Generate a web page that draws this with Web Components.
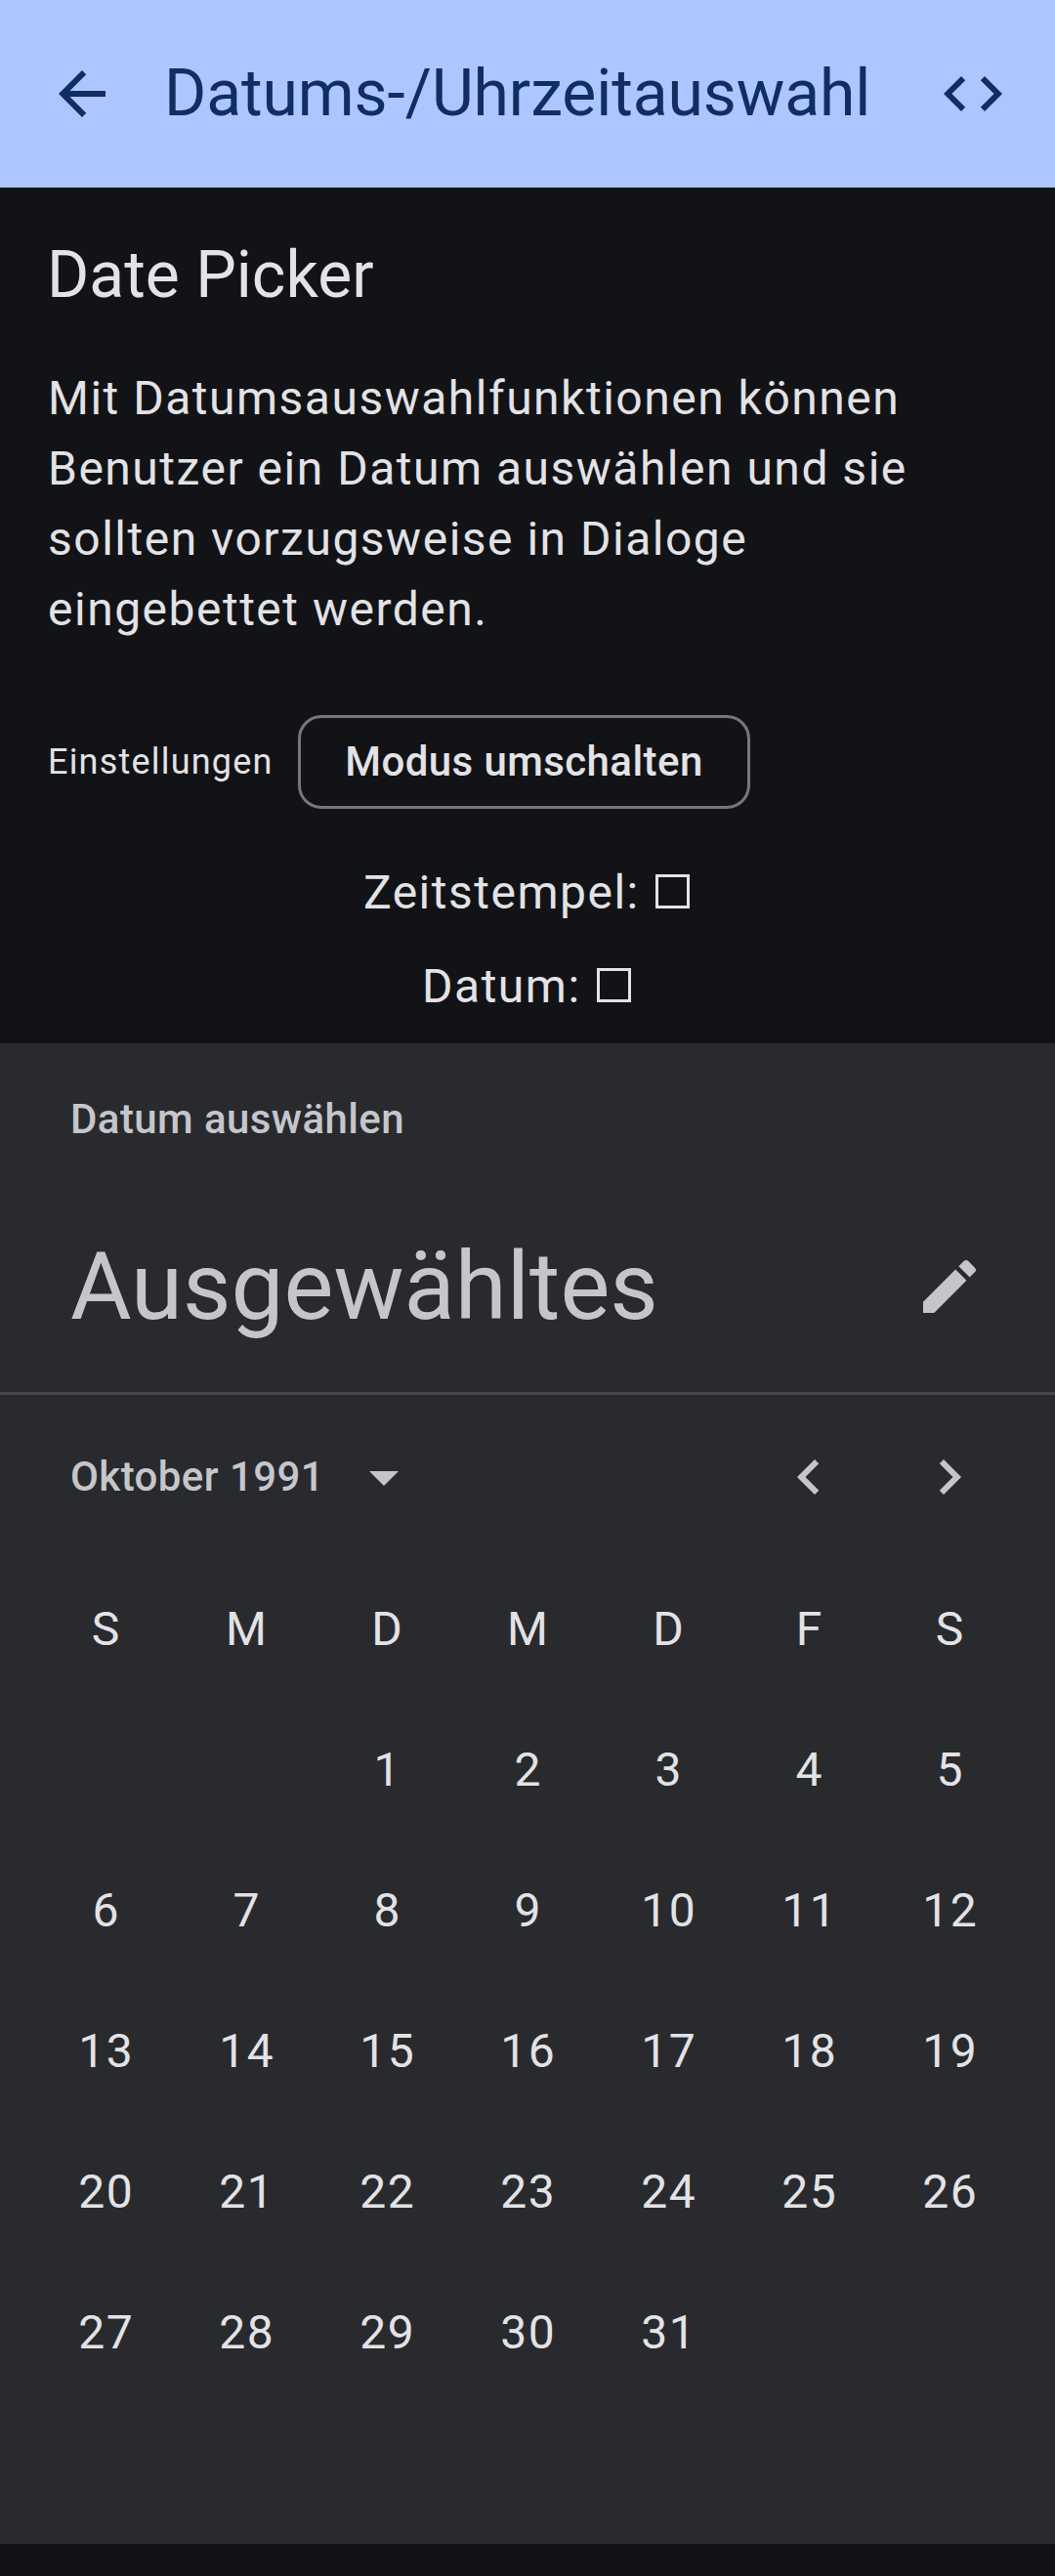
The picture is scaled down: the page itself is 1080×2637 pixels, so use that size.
<!DOCTYPE html>
<html lang="de">
<head>
<meta charset="utf-8">
<title>Datums-/Uhrzeitauswahl</title>
<style>
  html, body { margin: 0; background: #121316; }
  body { font-family: Roboto, sans-serif; font-size: 48px; line-height: 72px; color: #e3e2e6; width: 1080px; height: 2637px; overflow: hidden; }
</style>
</head>
<body>
<demo-page></demo-page>
<script>
const ICONS = {
  back: 'M20 11H7.83l5.59-5.59L12 4l-8 8 8 8 1.41-1.41L7.83 13H20v-2z',
  code: 'M9.4 16.6L4.8 12l4.6-4.6L8 6l-6 6 6 6 1.4-1.4zm5.2 0l4.6-4.6-4.6-4.6L16 6l6 6-6 6-1.4-1.4z',
  edit: 'M3 17.25V21h3.75L17.81 9.94l-3.75-3.75L3 17.25zM20.71 7.04c.39-.39.39-1.02 0-1.41l-2.34-2.34c-.39-.39-1.02-.39-1.41 0l-1.83 1.83 3.75 3.75 1.83-1.83z',
  left: 'M15.41 7.41L14 6l-6 6 6 6 1.41-1.41L10.83 12z',
  right: 'M10 6L8.59 7.41 13.17 12l-4.58 4.59L10 18l6-6z',
  drop: 'M7 10l5 5 5-5z'
};

function define(name, render) {
  customElements.define(name, class extends HTMLElement {
    constructor() {
      super();
      this.attachShadow({ mode: 'open' });
    }
    connectedCallback() {
      this.shadowRoot.innerHTML = render(this);
    }
  });
}

define('md-icon', el => `
  <style>:host { display: block; flex: none; width: 72px; height: 72px; } svg { display: block; }</style>
  <svg width="72" height="72" viewBox="0 0 24 24" fill="currentColor"><path d="${ICONS[el.getAttribute('name')]}"/></svg>`);

define('app-bar', () => `
  <style>
    :host { display: flex; align-items: center; box-sizing: border-box; height: 192px; padding: 0 48px; background: #adc6ff; color: #102f60; }
    h1 { flex: 1; margin: 0 0 0 48px; font: 400 66px/84px Roboto, sans-serif; letter-spacing: -.09px; white-space: nowrap; }
  </style>
  <md-icon name="back"></md-icon><h1><slot></slot></h1><md-icon name="code"></md-icon>`);

define('outlined-button', () => `
  <style>
    :host { display: block; }
    button { display: block; box-sizing: border-box; width: 463px; height: 96px; padding: 0; border: 3px solid #76777a; border-radius: 24px;
      background: none; color: inherit; font: 500 42px/60px Roboto, sans-serif; letter-spacing: .42px; white-space: nowrap; }
  </style>
  <button><slot></slot></button>`);

define('value-line', () => `
  <style>
    :host { display: flex; justify-content: center; height: 72px; letter-spacing: 1.5px; white-space: pre; }
    i { box-sizing: border-box; width: 35px; height: 35px; margin: 17px 4px 0 3px; border: 3px solid; }
    :host { padding-left: 2px; }
  </style>
  <slot></slot><i></i>`);

define('month-grid', el => {
  const lead = Number(el.getAttribute('offset'));
  const count = Number(el.getAttribute('days'));
  const cells = [...'SMDMDFS', ...Array(lead).fill(''), ...Array.from({ length: count }, (_, i) => i + 1)];
  return `
  <style>
    :host { display: grid; grid-template-columns: repeat(7, 144px); grid-auto-rows: 144px; justify-content: center; }
    span { display: flex; align-items: center; justify-content: center; padding-left: 1.5px; letter-spacing: 1.5px; }
  </style>
  ${cells.map(c => `<span>${c}</span>`).join('')}`;
});

define('date-picker', () => `
  <style>
    :host { display: block; box-sizing: border-box; height: 1536px; background: #292a2d; }
    header { box-sizing: border-box; height: 360px; padding: 48px 72px 0; border-bottom: 3px solid #454649; color: #c5c6cc; }
    .label, .month { font-weight: 500; font-size: 42px; line-height: 60px; letter-spacing: .42px; }
    .headline { display: flex; justify-content: space-between; align-items: center; height: 120px; margin-top: 81px; font-size: 96px; line-height: 120px; }
    nav { display: flex; align-items: center; height: 168px; padding: 0 72px; color: #c5c6cc; }
    .month { width: 285px; white-space: nowrap; }
    .prev { margin-left: auto; margin-right: 72px; }
  </style>
  <header>
    <div class="label">Datum auswählen</div>
    <div class="headline"><span>Ausgewähltes</span><md-icon name="edit"></md-icon></div>
  </header>
  <nav><div class="month">Oktober 1991</div><md-icon name="drop"></md-icon><md-icon class="prev" name="left"></md-icon><md-icon name="right"></md-icon></nav>
  <month-grid offset="2" days="31"></month-grid>`);

define('demo-page', () => `
  <style>
    :host { display: block; }
    section { display: flex; flex-direction: column; box-sizing: border-box; height: 876px; padding: 48px 48px 0; }
    h2 { margin: 0 0 48px; font: 400 66px/84px Roboto, sans-serif; }
    p { margin: 0 0 72px; padding-left: 1px; letter-spacing: 1.5px; }
    .settings { display: flex; align-items: center; height: 96px; margin-bottom: 50px; }
    .settings span { box-sizing: border-box; width: 257px; padding-left: 1px; font-size: 36px; line-height: 48px; letter-spacing: 1.2px; }
    value-line + value-line { margin-top: 24px; }
  </style>
  <app-bar>Datums-/Uhrzeitauswahl</app-bar>
  <section>
    <h2>Date Picker</h2>
    <p>Mit Datumsauswahlfunktionen können<br>Benutzer ein Datum auswählen und sie<br>sollten vorzugsweise in Dialoge<br>eingebettet werden.</p>
    <div class="settings"><span>Einstellungen</span><outlined-button>Modus umschalten</outlined-button></div>
    <value-line>Zeitstempel: </value-line>
    <value-line>Datum: </value-line>
  </section>
  <date-picker></date-picker>`);
</script>
</body>
</html>
